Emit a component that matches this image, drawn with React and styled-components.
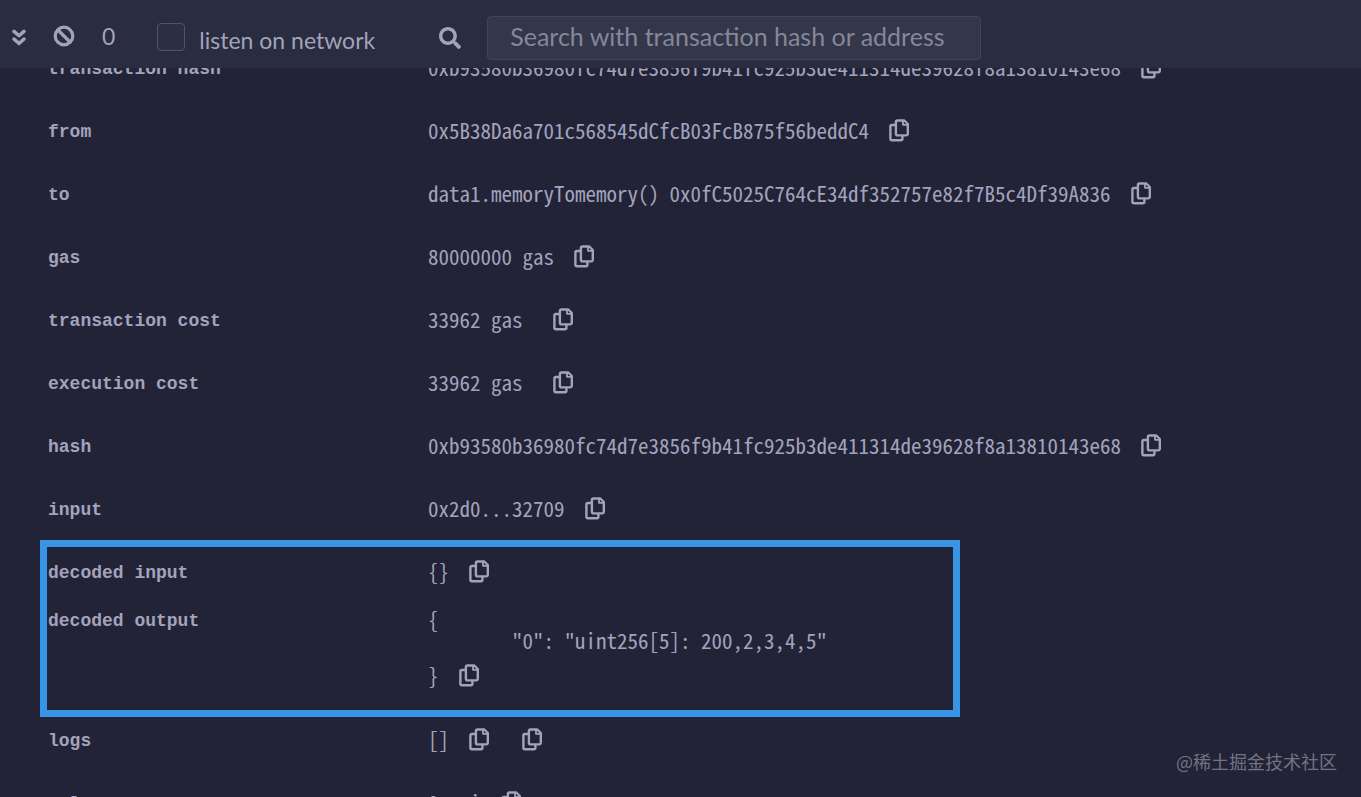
import { useState } from "react";
import { FaSearch } from "react-icons/fa";
import styled, { createGlobalStyle } from "styled-components";

const records = [
  {
    label: "transaction hash",
    value: "0xb93580b36980fc74d7e3856f9b41fc925b3de411314de39628f8a13810143e68",
  },
  { label: "from", value: "0x5B38Da6a701c568545dCfcB03FcB875f56beddC4" },
  {
    label: "to",
    value: "data1.memoryTomemory() 0x0fC5025C764cE34df352757e82f7B5c4Df39A836",
  },
  { label: "gas", value: "80000000 gas" },
  { label: "transaction cost", value: "33962 gas " },
  { label: "execution cost", value: "33962 gas " },
  {
    label: "hash",
    value: "0xb93580b36980fc74d7e3856f9b41fc925b3de411314de39628f8a13810143e68",
  },
  { label: "input", value: "0x2d0...32709" },
  { label: "decoded input", value: "{}", size: "short" },
  {
    label: "decoded output",
    open: "{",
    entry: '"0": "uint256[5]: 200,2,3,4,5"',
    value: "}",
    size: "tall",
  },
  { label: "logs", value: "[]", copies: 2 },
  { label: "val", value: "0 wei" },
];

const rowHeights = { short: "48px", normal: "63px", tall: "120px" };

const strokeProps = {
  fill: "none",
  stroke: "currentColor",
  strokeLinecap: "round",
  strokeLinejoin: "round",
};

function CopyIcon() {
  return (
    <svg width="20" height="24" viewBox="0 0 20 24" strokeWidth="2.4" {...strokeProps}>
      <path d="M8.5 2.5h6.8l3.5 3.5v9.8a1.6 1.6 0 0 1-1.6 1.6H8.5a1.6 1.6 0 0 1-1.6-1.6V4.1a1.6 1.6 0 0 1 1.6-1.6z" />
      <path d="M14 3v3.8h4.4" strokeWidth="1.8" />
      <path d="M6.5 7H2.9a1.5 1.5 0 0 0-1.5 1.5v12.2a1.5 1.5 0 0 0 1.5 1.5h9a1.5 1.5 0 0 0 1.5-1.5v-2.5" />
    </svg>
  );
}

function CollapseIcon() {
  return (
    <svg width="14" height="22" viewBox="0 0 14 22" strokeWidth="3.4" {...strokeProps}>
      <path d="M2 6.4l5 4.4 5-4.4M2 14l5 4.6 5-4.6" />
    </svg>
  );
}

function ClearIcon() {
  return (
    <svg width="22" height="22" viewBox="0 0 22 22" strokeWidth="3.2" {...strokeProps}>
      <circle cx="11" cy="11" r="8.8" />
      <path d="M5 5l12 12" />
    </svg>
  );
}

function Record({ label, open, entry, value, size = "normal", copies = 1 }) {
  return (
    <Row $size={size}>
      <Label scope="row">{label}</Label>
      <Value>
        {open && <Line>{open}</Line>}
        {entry && <Entry>{entry}</Entry>}
        <CopyLine $spaced={Boolean(entry)}>
          <span>{value}</span>
          <Copies>
            {Array.from({ length: copies }, (_, i) => (
              <IconButton key={i} type="button" aria-label={`Copy ${label}`}>
                <CopyIcon />
              </IconButton>
            ))}
          </Copies>
        </CopyLine>
      </Value>
    </Row>
  );
}

function App() {
  const [listening, setListening] = useState(false);
  const [query, setQuery] = useState("");

  return (
    <Terminal>
      <GlobalStyle />
      <Toolbar>
        <Actions>
          <IconButton type="button" aria-label="Collapse">
            <CollapseIcon />
          </IconButton>
          <IconButton type="button" aria-label="Clear console">
            <ClearIcon />
          </IconButton>
          <span>0</span>
        </Actions>
        <Listen>
          <Checkbox
            id="listen"
            type="checkbox"
            checked={listening}
            onChange={(e) => setListening(e.target.checked)}
          />
          <ListenLabel htmlFor="listen">listen on network</ListenLabel>
        </Listen>
        <SearchBox>
          <IconButton type="button" aria-label="Search">
            <FaSearch size={22} />
          </IconButton>
          <SearchInput
            type="text"
            aria-label="Search transactions"
            placeholder="Search with transaction hash or address"
            value={query}
            onChange={(e) => setQuery(e.target.value)}
          />
        </SearchBox>
      </Toolbar>
      <Journal>
        <Table>
          <tbody>
            {records.map((record) => (
              <Record key={record.label} {...record} />
            ))}
          </tbody>
        </Table>
        <Highlight />
      </Journal>
      <Watermark>@稀土掘金技术社区</Watermark>
    </Terminal>
  );
}

const GlobalStyle = createGlobalStyle`
  * {
    box-sizing: border-box;
  }

  body {
    margin: 0;
    background-color: #222336;
  }
`;

const Terminal = styled.div`
  position: relative;
  display: flex;
  flex-direction: column;
  height: 100vh;
  overflow: hidden;
  background-color: #222336;
  color: #a2a3bd;
`;

const Toolbar = styled.header`
  display: flex;
  flex-shrink: 0;
  align-items: flex-start;
  height: 68px;
  padding: 16px 12px 8px;
  background-color: #2a2c3f;
  font-family: Lato, "Noto Sans", sans-serif;
  font-size: 23px;
`;

const Actions = styled.div`
  display: flex;
  align-items: center;
  gap: 27px;
  height: 40px;
`;

const Listen = styled.div`
  display: flex;
  gap: 14px;
  margin-left: 42px;
  padding-top: 7px;
`;

const Checkbox = styled.input`
  appearance: none;
  width: 28px;
  height: 28px;
  margin: 0;
  border: 1px solid #51536a;
  border-radius: 4px;
  background-color: #2c3044;

  &:checked {
    background-color: #3894e4;
  }
`;

const ListenLabel = styled.label`
  line-height: 34px;
`;

const SearchBox = styled.div`
  display: flex;
  flex: 1;
  align-items: center;
  gap: 26px;
  margin-left: 64px;
`;

const SearchInput = styled.input`
  width: 494px;
  height: 44px;
  padding: 0 22px 4px;
  border: 1px solid #414359;
  border-radius: 4px;
  background-color: #34374a;
  color: #a2a3bd;
  font-family: inherit;
  font-size: 25px;

  &::placeholder {
    color: #85879a;
    opacity: 1;
  }
`;

const Journal = styled.main`
  position: relative;
  flex: 1;
  min-height: 0;
  overflow: hidden;
`;

/* scrolled part of the way down, so the first row is cut by the toolbar */
const Table = styled.table`
  width: 100%;
  margin-top: -27px;
  border-collapse: collapse;
  font-family: "Noto Sans Mono CJK SC", "Liberation Mono", monospace;
  font-size: 21px;
  line-height: 21px;
`;

const Row = styled.tr`
  height: ${({ $size }) => rowHeights[$size]};
`;

const Label = styled.th`
  width: 428px;
  padding: 18px 0 0 48px;
  font-family: "Liberation Mono", monospace;
  font-size: 18px;
  font-weight: bold;
  text-align: left;
  vertical-align: top;
`;

const Value = styled.td`
  padding: 16px 0 0;
  vertical-align: top;
  white-space: pre;
`;

const Line = styled.div`
  height: 21px;
`;

const Entry = styled(Line)`
  padding-left: 84px;
`;

const CopyLine = styled.div`
  display: flex;
  align-items: center;
  gap: 20px;
  height: 21px;
  margin-top: ${({ $spaced }) => ($spaced ? "14px" : "0")};
`;

const Copies = styled.span`
  display: flex;
  gap: 33px;
  padding-bottom: 2px;
`;

const IconButton = styled.button`
  display: flex;
  padding: 0;
  border: none;
  background: none;
  color: inherit;

  &:hover {
    cursor: pointer;
  }
`;

const Highlight = styled.div`
  position: absolute;
  top: 472px;
  left: 40px;
  width: 920px;
  height: 177px;
  border: 7px solid #3894e4;
  pointer-events: none;
`;

const Watermark = styled.p`
  position: absolute;
  right: 24px;
  bottom: 22px;
  margin: 0;
  color: #727382;
  font-family: "Noto Sans CJK SC", sans-serif;
  font-size: 18px;
  line-height: 28px;
`;

export default App;
